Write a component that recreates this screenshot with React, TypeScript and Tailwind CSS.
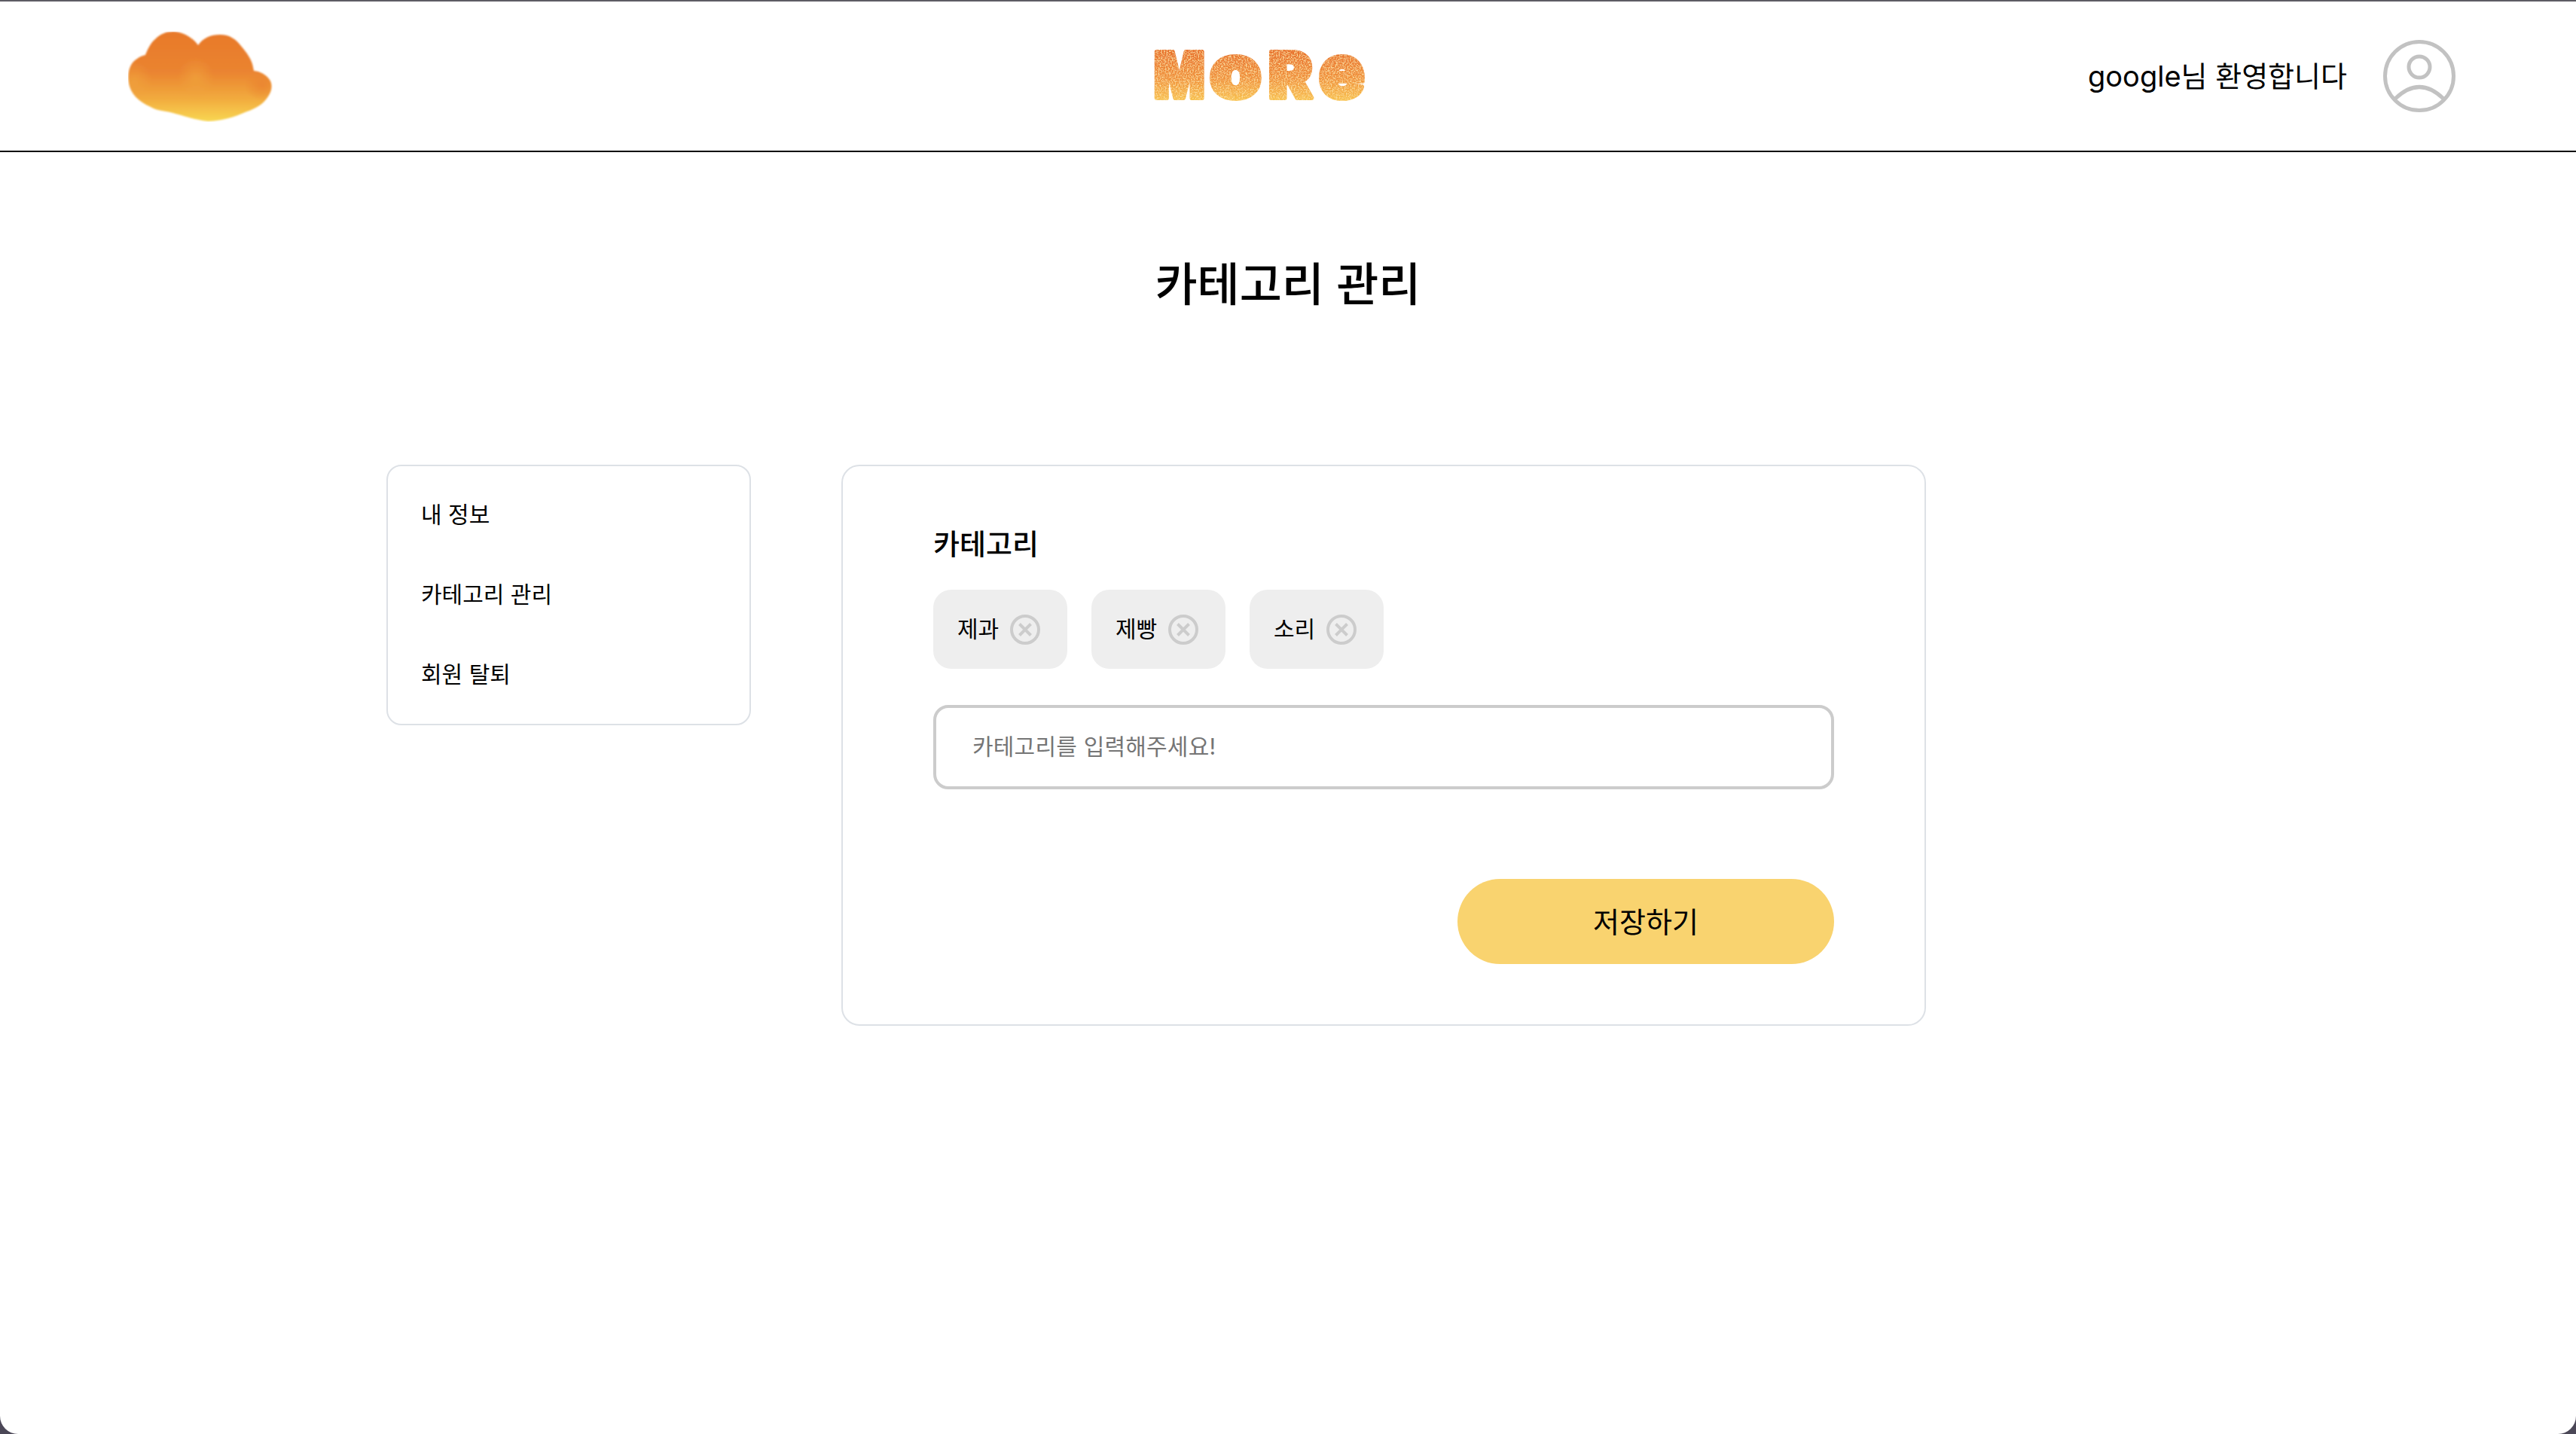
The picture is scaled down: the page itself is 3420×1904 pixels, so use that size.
import React from "react";

const categories = ["제과", "제빵", "소리"];
const menus = ["내 정보", "카테고리 관리", "회원 탈퇴"];

function CloudLogo() {
    const cloud =
        "M93 18 C100 8 110 4 122 4 C135 4 143 10 150 19 C158 29 164 36 166 47 L167 52 C176 53 183 57 188 64 C192 70 191 79 186 86 C180 96 170 102 158 106 C140 114 122 119 106 119 C92 118 78 113 63 109 C52 105 40 106 30 100 C14 93 3 82 1 68 C-1 54 2 42 12 36 C16 33 19 32 23 31 C26 24 29 16 36 10 C43 3 50 0 60 0 C73 0 86 8 93 18 Z";
    return (
        <svg width="192" height="120" viewBox="0 0 192 120" className="shrink-0">
            <defs>
                <linearGradient id="cloudBase" x1="0" y1="0" x2="0" y2="1">
                    <stop offset="0" stopColor="#e8792a" />
                    <stop offset="0.45" stopColor="#ea8430" />
                    <stop offset="0.75" stopColor="#f2ab3e" />
                    <stop offset="1" stopColor="#f8d652" />
                </linearGradient>
                <radialGradient id="cloudPatch">
                    <stop offset="0" stopColor="#f0a33d" stopOpacity="0.7" />
                    <stop offset="1" stopColor="#f0a33d" stopOpacity="0" />
                </radialGradient>
                <radialGradient id="cloudLobe">
                    <stop offset="0" stopColor="#ea8530" stopOpacity="0.9" />
                    <stop offset="1" stopColor="#ea8530" stopOpacity="0" />
                </radialGradient>
                <filter id="cloudSoft" x="-5%" y="-5%" width="110%" height="110%">
                    <feGaussianBlur stdDeviation="0.8" />
                </filter>
                <clipPath id="cloudClip">
                    <path d={cloud} />
                </clipPath>
            </defs>
            <g filter="url(#cloudSoft)">
                <path d={cloud} fill="url(#cloudBase)" />
                <g clipPath="url(#cloudClip)">
                    <ellipse cx="90" cy="62" rx="24" ry="28" fill="url(#cloudPatch)" />
                    <ellipse cx="178" cy="70" rx="24" ry="22" fill="url(#cloudLobe)" />
                    <ellipse cx="8" cy="66" rx="24" ry="26" fill="url(#cloudPatch)" />
                </g>
            </g>
        </svg>
    );
}

function MoreLogo() {
    const letter = {
        fontFamily: "Inter, 'Liberation Sans', sans-serif",
        fontWeight: 900,
        fill: "url(#moreFill)",
        stroke: "url(#moreFill)",
        strokeWidth: 6,
        strokeLinejoin: "round" as const,
    };
    return (
        <svg width="290" height="74" viewBox="0 0 290 74" className="shrink-0">
            <defs>
                {/* letters are translated to the baseline, so y runs up from 0 */}
                <linearGradient id="moreFill" gradientUnits="userSpaceOnUse" x1="0" y1="-62" x2="0" y2="4">
                    <stop offset="0" stopColor="#e8702a" />
                    <stop offset="0.55" stopColor="#f0913a" />
                    <stop offset="1" stopColor="#f8c24e" />
                </linearGradient>
                <filter id="moreGrain" x="-2%" y="-5%" width="104%" height="110%">
                    <feTurbulence type="fractalNoise" baseFrequency="0.55" numOctaves="2" seed="4" result="noise" />
                    <feColorMatrix
                        in="noise"
                        type="matrix"
                        values="0 0 0 0 0.98  0 0 0 0 0.76  0 0 0 0 0.34  0 0 0 2.6 -1.1"
                        result="speck"
                    />
                    <feComposite in="speck" in2="SourceAlpha" operator="in" result="grain" />
                    <feMerge>
                        <feMergeNode in="SourceGraphic" />
                        <feMergeNode in="grain" />
                    </feMerge>
                    <feGaussianBlur stdDeviation="0.5" />
                </filter>
            </defs>
            <g filter="url(#moreGrain)">
                <text {...letter} fontSize="84" transform="translate(3 66) scale(0.84 1)">
                    M
                </text>
                <text {...letter} fontSize="100" transform="translate(77 66) scale(1.1 1)">
                    o
                </text>
                <text {...letter} fontSize="84" transform="translate(155 66) scale(1.04 1)">
                    R
                </text>
                <text {...letter} fontSize="100" transform="translate(222 66) scale(1 1)">
                    e
                </text>
            </g>
        </svg>
    );
}

function UserIcon() {
    return (
        <svg width="96" height="96" viewBox="0 0 96 96" fill="none" stroke="#c2c2c2" className="shrink-0">
            <circle cx="48" cy="48" r="45.5" strokeWidth="5" />
            <circle cx="48" cy="36" r="14" strokeWidth="5" />
            <path d="M16 78 Q48 47 80 78" strokeWidth="5" />
        </svg>
    );
}

function RemoveIcon() {
    return (
        <svg width="40" height="40" viewBox="0 0 40 40" fill="none" stroke="#cccccc" strokeWidth="4" className="shrink-0">
            <circle cx="20" cy="20" r="18" />
            <path d="M12.5 12.5 L27.5 27.5 M27.5 12.5 L12.5 27.5" />
        </svg>
    );
}

export default function App() {
    return (
        <div className="h-screen bg-[#4b4757] overflow-hidden [font-family:'Inter','Noto_Sans_CJK_KR',sans-serif] text-black">
            <div className="h-full bg-white rounded-b-[24px] border-t-2 border-[#5d5c64]">
                <header className="h-[200px] border-b-2 border-black flex items-center">
                    <div className="ml-[170px] mb-[-2px]">
                        <CloudLogo />
                    </div>
                    <div className="ml-[1167px]">
                        <MoreLogo />
                    </div>
                    <div className="ml-auto mr-[160px] flex items-center gap-[48px]">
                        <span className="text-[38px]">google님 환영합니다</span>
                        <UserIcon />
                    </div>
                </header>

                <h1 className="mt-[127px] h-[100px] flex items-center justify-center text-[61px] font-medium">
                    카테고리 관리
                </h1>

                <div className="mt-[188px] ml-[513px] flex items-start gap-[120px]">
                    <nav className="w-[484px] h-[346px] border-2 border-[#dde1e6] rounded-[20px] py-[11px] pl-[44px]">
                        {menus.map((menu) => (
                            <div key={menu} className="h-[106px] flex items-center text-[30px]">
                                {menu}
                            </div>
                        ))}
                    </nav>

                    <section className="w-[1440px] h-[745px] border-2 border-[#dde1e6] rounded-[24px] pt-[81px] px-[120px]">
                        <h2 className="h-[44px] flex items-center text-[38px] font-medium">카테고리</h2>
                        <div className="mt-[39px] flex gap-[32px]">
                            {categories.map((category) => (
                                <div
                                    key={category}
                                    className="w-[178px] h-[105px] pl-[32px] flex items-center gap-[15px] bg-[#eeeeee] rounded-[24px] text-[30px]"
                                >
                                    <span>{category}</span>
                                    <RemoveIcon />
                                </div>
                            ))}
                        </div>
                        <input
                            className="mt-[48px] block w-full h-[112px] pl-[48px] pr-[46px] pb-[2px] border-4 border-[#cccccc] rounded-[20px] text-[30px] tracking-[0.2px] outline-none placeholder:text-[#757575]"
                            placeholder="카테고리를 입력해주세요!"
                        />
                        <div className="mt-[119px] flex justify-end">
                            <button className="w-[500px] h-[113px] pt-[2px] bg-[#f9d36f] rounded-full text-[38px]">
                                저장하기
                            </button>
                        </div>
                    </section>
                </div>
            </div>
        </div>
    );
}
